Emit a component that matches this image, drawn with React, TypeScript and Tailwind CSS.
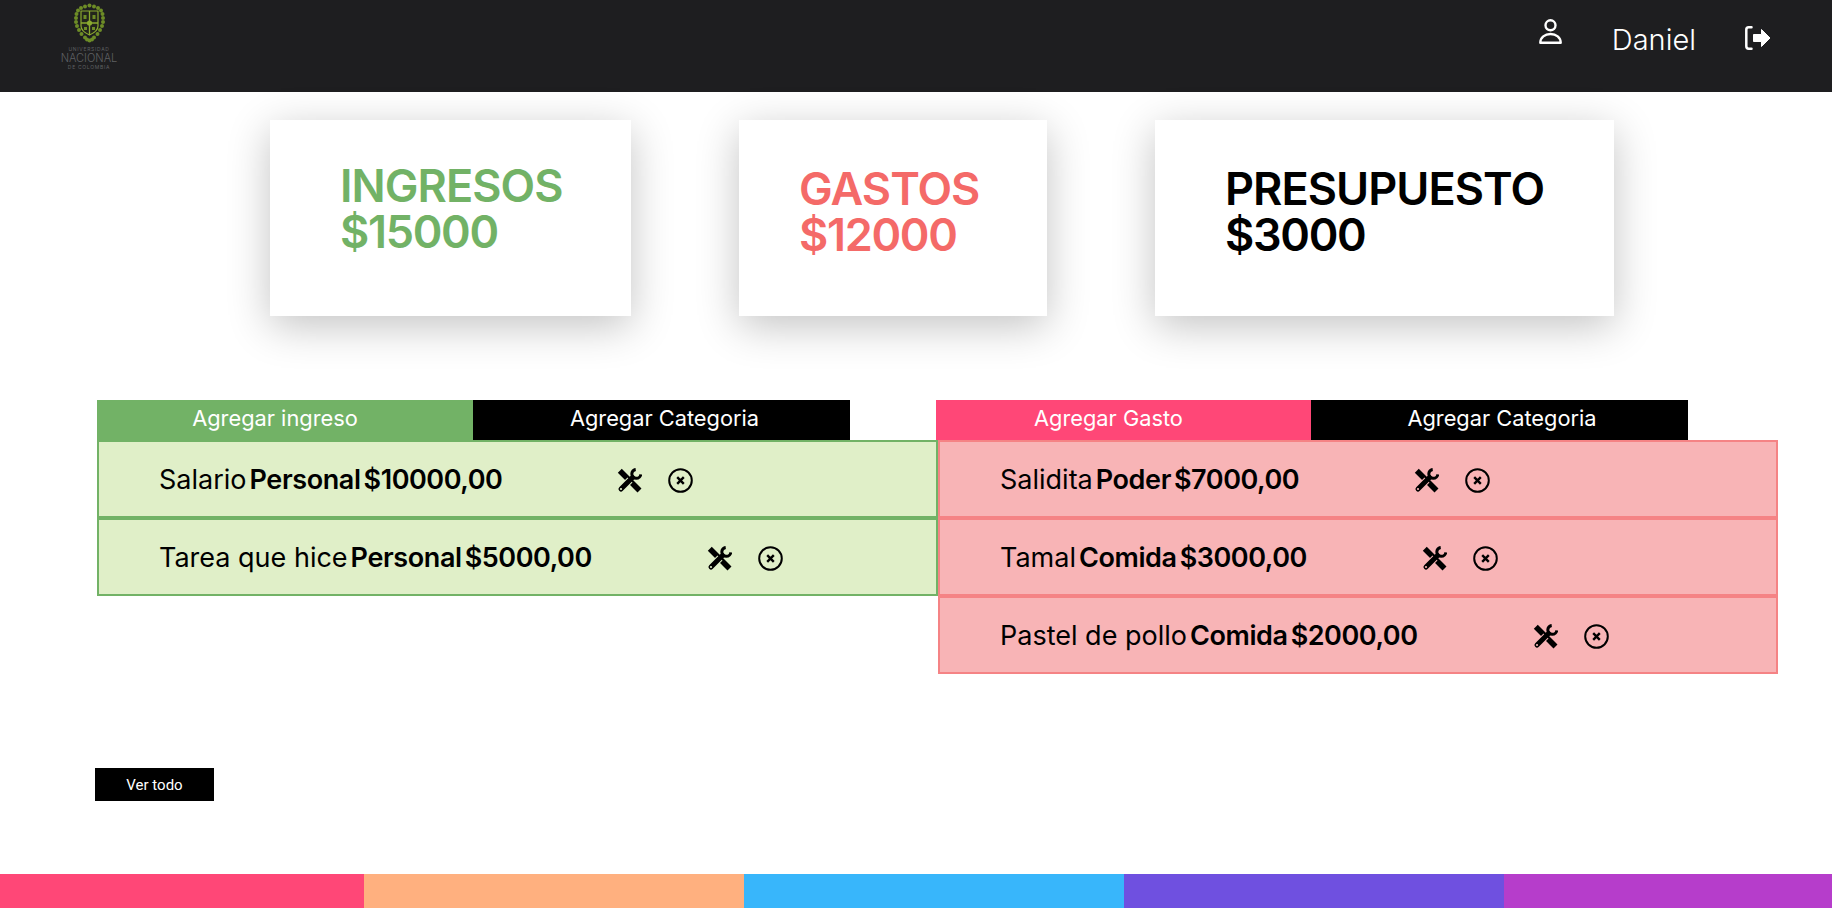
type Entry = {
  name: string;
  category: string;
  amount: string;
};

const incomes: Entry[] = [
  { name: "Salario", category: "Personal", amount: "$10000,00" },
  { name: "Tarea que hice", category: "Personal", amount: "$5000,00" },
];

const expenses: Entry[] = [
  { name: "Salidita", category: "Poder", amount: "$7000,00" },
  { name: "Tamal", category: "Comida", amount: "$3000,00" },
  { name: "Pastel de pollo", category: "Comida", amount: "$2000,00" },
];

const crestDots = [
  [15.5, 1.5], [11, 2.5], [20, 2.5], [7, 4], [24, 4], [4, 6.5], [27, 6.5], [2.5, 10], [28.5, 10],
  [2, 14], [29, 14], [2, 18], [29, 18], [3, 22], [28, 22], [5, 26], [26, 26], [7.5, 30], [23.5, 30],
  [11, 33.5], [20, 33.5], [15.5, 36.5], [13, 35.5], [18, 35.5],
];

function Crest() {
  return (
    <svg width="31" height="40" viewBox="0 0 31 38" fill="none">
      {crestDots.map(([cx, cy]) => (
        <circle key={`${cx}-${cy}`} cx={cx} cy={cy} r="2" fill="#6d8c26" />
      ))}
      <path d="M7 7h17v15c0 4-4 7-8.500 9-4.500-2-8.500-5-8.500-9z" fill="#23251c" stroke="#8aa92f" strokeWidth="1.200" />
      <path d="M15.500 7v24M7 19h17" stroke="#8aa92f" strokeWidth="1.300" />
      <circle cx="15.500" cy="19" r="2.600" fill="#8aa92f" />
      <path d="M9.500 11h3v4h-3zM18.500 11h3v4h-3zM10 23h3v3h-3zM18 23h3v3h-3z" fill="#6d8c26" />
    </svg>
  );
}

function Logo() {
  return (
    <div className="flex w-[60px] flex-col items-center pt-[3px] text-[#5f6063]">
      <Crest />
      <span className="mt-[3px] text-[5px] leading-[6px] tracking-[0.7px] whitespace-nowrap">UNIVERSIDAD</span>
      <span className="text-[11px] leading-[12px] font-light whitespace-nowrap">NACIONAL</span>
      <span className="text-[5px] leading-[7px] tracking-[0.7px] whitespace-nowrap">DE COLOMBIA</span>
    </div>
  );
}

function UserIcon() {
  return (
    <svg width="23" height="25" viewBox="0 0 23 25" fill="none" stroke="white" strokeWidth="2.400" strokeLinejoin="round">
      <circle cx="11.500" cy="6.300" r="5" />
      <path d="M1.300 23.700c0-5.200 4.600-8.700 10.200-8.700s10.200 3.500 10.200 8.700z" />
    </svg>
  );
}

function LogoutIcon() {
  return (
    <svg width="26" height="24" viewBox="0 0 26 24" fill="white">
      <path d="M6.500 1.300H3.700Q1.300 1.300 1.300 3.700V20.300Q1.300 22.700 3.700 22.700H6.500" fill="none" stroke="white" strokeWidth="2.500" strokeLinecap="round" />
      <path d="M8.500 8.500h8V3.500L25 12l-8.500 8.500v-5h-8z" stroke="white" strokeWidth="1" strokeLinejoin="round" />
    </svg>
  );
}

function ToolsIcon({ gap }: { gap: string }) {
  return (
    <svg width="25" height="25" viewBox="0 0 25 25" fill="none" className="shrink-0">
      <path d="M2.800 2.800L22.500 22.500" stroke="black" strokeWidth="5.600" />
      <path d="M13 12L9 16" stroke={gap} strokeWidth="7" />
      <path d="M15.500 9.500L4 21" stroke="black" strokeWidth="5" strokeLinecap="round" />
      <path d="M18.700 1.400A4.500 4.500 0 1 0 23.800 6.300" stroke="black" strokeWidth="3" />
      <circle cx="4" cy="21" r="1.100" fill={gap} />
    </svg>
  );
}

function XCircleIcon() {
  return (
    <svg width="25" height="25" viewBox="0 0 25 25" fill="none" stroke="black" className="shrink-0">
      <circle cx="12.500" cy="12.500" r="11.300" strokeWidth="2" />
      <path d="M9.200 9.200l6.600 6.600M15.800 9.200l-6.600 6.600" strokeWidth="2.400" />
    </svg>
  );
}

function SummaryCard({ title, amount, color, className }: { title: string; amount: string; color: string; className: string }) {
  return (
    <div className={`h-[196px] bg-white shadow-[0_10px_40px_rgba(0,0,0,0.24)] ${className}`}>
      <p className={`text-[45px] leading-[46px] font-semibold tracking-[-0.95px] ${color}`}>{title}</p>
      <p className={`text-[45px] leading-[46px] font-semibold tracking-[-1.3px] ${color}`}>{amount}</p>
    </div>
  );
}

function EntryRow({ entry, border, gap }: { entry: Entry; border: string; gap: string }) {
  return (
    <div className={`flex h-[78px] items-center border-2 pl-[60px] pt-[2px] text-[27px] text-black ${border}`}>
      <span>{entry.name}</span>
      <span className="ml-[3px] font-semibold tracking-[-0.4px]">{entry.category}</span>
      <span className="ml-[3px] font-semibold tracking-[-0.45px]">{entry.amount}</span>
      <span className="ml-[115px]">
        <ToolsIcon gap={gap} />
      </span>
      <span className="ml-[26px]">
        <XCircleIcon />
      </span>
    </div>
  );
}

export default function App() {
  return (
    <div className="flex h-[908px] flex-col overflow-hidden bg-white font-['Inter',sans-serif]">
      <header className="flex h-[92px] shrink-0 items-start justify-between bg-[#1e1e20] pl-[59px] pr-[61px] text-white">
        <Logo />
        <div className="flex items-start">
          <span className="mt-[19px]"><UserIcon /></span>
          <span className="ml-[50px] mt-[21px] text-[29px] leading-[38px] font-light">Daniel</span>
          <span className="ml-[49px] mt-[26px]"><LogoutIcon /></span>
        </div>
      </header>

      <section className="mt-[28px] flex pl-[270px]">
        <SummaryCard title="INGRESOS" amount="$15000" color="text-[#72b266]" className="w-[361px] pl-[70px] pt-[43px]" />
        <SummaryCard title="GASTOS" amount="$12000" color="text-[#f46a68]" className="ml-[108px] w-[308px] pl-[60px] pt-[46px]" />
        <SummaryCard title="PRESUPUESTO" amount="$3000" color="text-black" className="ml-[108px] w-[459px] pl-[70px] pt-[46px]" />
      </section>

      <section className="mt-[84px] flex items-start pl-[97px]">
        <div className="w-[841px]">
          <div className="flex h-[40px] text-[21.800px] text-white">
            <button className="w-[376px] bg-[#72b266] pb-[4px] pr-[20px]">Agregar ingreso</button>
            <button className="w-[377px] bg-black pb-[4px] pl-[6px]">Agregar Categoria</button>
          </div>
          {incomes.map((entry) => (
            <EntryRow key={entry.name} entry={entry} border="border-[#72b266] bg-[#e0efc8]" gap="#e0efc8" />
          ))}
        </div>
        <div className="w-[840px]">
          <div className="flex h-[40px] text-[21.800px] text-white">
            <button className="ml-[-2px] w-[375px] bg-[#ff4777] pb-[4px] pr-[30px]">Agregar Gasto</button>
            <button className="w-[377px] bg-black pb-[4px] pl-[5px]">Agregar Categoria</button>
          </div>
          {expenses.map((entry) => (
            <EntryRow key={entry.name} entry={entry} border="border-[#f58385] bg-[#f8b4b6]" gap="#f8b4b6" />
          ))}
        </div>
      </section>

      <button className="ml-[95px] mt-[94px] h-[33px] w-[119px] bg-black pt-[2px] font-['Roboto',sans-serif] text-[15px] text-white">
        Ver todo
      </button>

      <footer className="mt-auto flex h-[34px] shrink-0">
        <div className="w-[364px] bg-[#ff4777]" />
        <div className="w-[380px] bg-[#ffb07f]" />
        <div className="w-[380px] bg-[#38b6fb]" />
        <div className="w-[380px] bg-[#6f50e0]" />
        <div className="flex-1 bg-[#b63dcb]" />
      </footer>
    </div>
  );
}
